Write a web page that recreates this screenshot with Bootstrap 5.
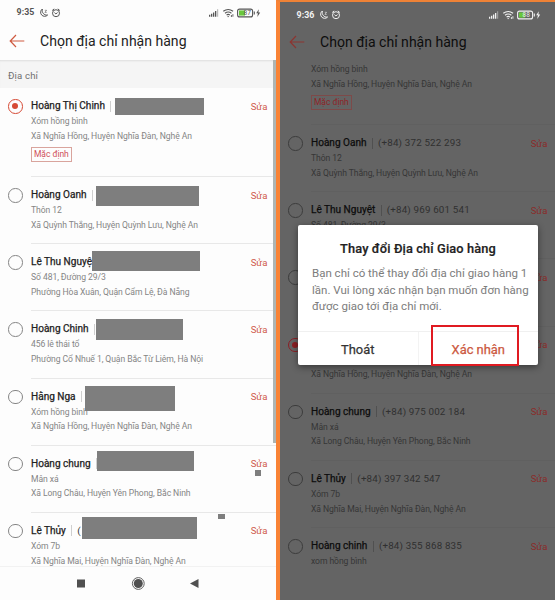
<!DOCTYPE html>
<html lang="vi">
<head>
<meta charset="utf-8">
<meta name="viewport" content="width=device-width, initial-scale=1">
<title>Chọn địa chỉ nhận hàng</title>
<link href="https://cdn.jsdelivr.net/npm/bootstrap@5.3.0/dist/css/bootstrap.min.css" rel="stylesheet">
<style>
body{font-family:Roboto,"Noto Sans",sans-serif;width:555px;height:600px;overflow:hidden;background:#fdfdfd}
.phone{height:600px;--ink:#222;--soft:#858585;--rule:#e8e8e8;--accent:#cf5a4b;--ring:#858585;--bg:#fdfdfd;color:var(--ink);background:var(--bg)}
.phone-a{width:276px}
.phone-b{width:279px;border-left:4px solid #f98335;border-top:2px solid #ee8236;--ink:#0d0d0d;--soft:#363636;--rule:#606060;--accent:#8a2c2a;--ring:#3c3c3c;--bg:#646464}
.status{height:25px;font-size:8.8px;font-weight:700;letter-spacing:.1px;line-height:25px;padding:0 14px 0 16.5px;color:#555}
.phone-b .status{height:26px;line-height:26px;padding:0 13px 0 16.5px;color:#f2f2f2}
.status svg{display:block}
.topbar{height:35px;padding:0 0 4px 9px;gap:15px}
.phone-b .topbar{height:34px;padding-bottom:6px}
.topbar h1{font-size:14.05px;font-weight:400;line-height:20px;margin:0}
.section-label{height:28px;line-height:31px;background:#f5f5f5;font-size:9.6px;color:#6f6f6f;padding-left:8px;box-shadow:inset 0 2px 2px -1px #ddd;letter-spacing:.15px}
.entry{height:67.2px;flex:none;padding-left:8px}
.entry-first{height:89px}
.entry .ring{width:14.5px;height:14.5px;border:1px solid var(--ring);border-radius:50%;margin-top:11px;flex:none}
.entry .ring.on{border:1.5px solid #d64a35;display:grid;place-items:center}
.entry .ring.on::after{content:"";width:6px;height:6px;border-radius:50%;background:#d64a35}
.phone-b .entry .ring.on{border-color:#8b1f24}
.phone-b .entry .ring.on::after{background:#8b1f24}
.entry .info{margin-left:8.5px;padding-top:10px;border-bottom:1px solid var(--rule);white-space:nowrap}
.who{height:16px;line-height:16px;font-size:10.05px;font-weight:400;-webkit-text-stroke:.25px currentColor}
.who .bar{width:1px;height:11px;background:#cfcfcf;margin:0 5px 0 5.5px}
.phone-b .who .bar{background:#505050}
.tel{font-size:9.8px;letter-spacing:.17px;color:#303030;-webkit-text-stroke:0}
.place{height:14.6px;line-height:15.6px;font-size:8.6px;letter-spacing:-.075px;color:var(--soft)}
.edit{position:relative;top:.5px;font-size:9.6px;color:var(--accent);margin-left:auto;padding-right:8.5px;-webkit-text-stroke:0}
.phone-b .edit{padding-right:7.5px}
.tagbox{display:inline-block;border:1px solid #d9a49d;color:#d0505a;font-size:8.5px;line-height:13px;height:15px;padding:0 2px;letter-spacing:-.05px;margin-top:4px;vertical-align:top}
.phone-b .tagbox{border-color:#7d4a49;color:#8d2428}
.clip-view{height:538px;overflow:hidden}
.clip-view>.entry-first{margin-top:-26px}
.mask{position:absolute;background:#7e7e7e}
.m1{left:115px;top:98px;width:89px;height:17px}
.m2{left:96px;top:186px;width:103px;height:20px}
.m3{left:92px;top:251px;width:108px;height:20px}
.m4{left:96px;top:319px;width:87px;height:21px}
.m5{left:85px;top:386px;width:90px;height:25px}
.m6{left:97px;top:451px;width:97px;height:20px}
.m7{left:82px;top:517px;width:115px;height:22px}
.m8{left:255px;top:470px;width:6px;height:6px}
.m9{left:218px;top:514px;width:7px;height:5px}
.scroller{position:absolute;right:0;top:60px;width:3px;height:383px;background:#aeb5b3}
.sysnav{position:absolute;left:0;right:0;bottom:0;height:34px;background:#fdfdfd;border-top:1px solid #f2f2f2}
.sheet{position:absolute;left:298px;top:225px;width:240px;height:140px;background:#fff;border-radius:2px;box-shadow:0 2px 7px rgba(0,0,0,.45)}
.sheet h2{font-size:12.8px;font-weight:500;-webkit-text-stroke:.2px currentColor;color:#222;margin:0;padding-top:15px;line-height:18px;text-align:center;letter-spacing:.12px}
.sheet p{font-size:11.5px;line-height:16.5px;color:#7c7c7c;margin:7px 0 0 14px;white-space:nowrap}
.choices{position:absolute;left:0;right:0;bottom:0;height:34px;border-top:1px solid #f0f0f0;font-size:12.9px;-webkit-text-stroke:.25px currentColor}
.choices button{flex:1;border:0;background:none;padding:2px 0 0;color:#333}
.choices button+button{border-left:1px solid #f3f3f3;color:#cc5840}
.spot{position:absolute;left:431px;top:325px;width:88px;height:41px;border:2px solid #e01a21}
</style>
<script src="https://cdn.jsdelivr.net/npm/bootstrap@5.3.0/dist/js/bootstrap.bundle.min.js"></script>
</head>
<body>
<svg width="0" height="0" class="position-absolute">
<defs>
<symbol id="night" viewBox="0 0 22 10"><g fill="none" stroke="currentColor" stroke-width="1"><path d="M3.4 1A4 4 0 1 0 8.6 7A4.6 4.6 0 0 1 3.400 1Z"/><path d="M5.800 2.300h1.800L5.900 4.400h1.800" stroke-width=".6"/><circle cx="17" cy="5.200" r="3.500"/><path d="M13.200 2.500l2-1.600M20.800 2.500l-2-1.600M15.400 4.600l1.500 1.300 1.700-1.300"/></g></symbol>
<symbol id="signals" viewBox="0 0 54 10">
<g fill="currentColor"><path d="M1 6.8h1.3v2H1zM3 5.7h1.3v3.1H3zM5 4.4h1.3v4.4H5zM7 3h1.3v5.8H7z"/><path d="M9 1.2h1.2v7.6H9z" opacity=".4"/><path d="M50.8 1.2L48.2 5.3h1.7L49.3 9l2.9-4.5h-1.8z"/></g>
<g fill="none" stroke="currentColor" stroke-width="1.1"><path d="M15.3 3.3q4.9-3.5 9.8 0M17 5.2q3.2-2.3 6.4 0M18.6 7q1.6-1.2 3.2 0"/><path d="M19.5 8.6h1.4M23.4 7v2M24.9 6.2v2.5" stroke-width=".9"/><rect x="29.6" y="1.1" width="15" height="7.8" rx="2"/><path d="M46.3 3.5v3"/></g>
<rect x="31" y="2.4" width="6" height="5.2" fill="#69c83c"/></symbol>
<symbol id="back" viewBox="0 0 16 14"><path d="M7 1L1.2 7L7 13M1.2 7H15.3" fill="none" stroke="currentColor" stroke-width="1.2"/></symbol>
</defs></svg>
<main class="d-flex position-relative">
<section class="phone phone-a position-relative overflow-hidden">
<div class="status d-flex align-items-center"><span>9:35</span><svg class="ms-1" width="22" height="10"><use href="#night"/></svg><svg class="ms-auto" width="54" height="10"><use href="#signals"/><text x="35.500" y="7.400" font-size="6.500" font-weight="400" fill="currentColor">87</text></svg></div>
<header class="topbar d-flex align-items-center"><svg width="16" height="14" color="#cf5a40"><use href="#back"/></svg><h1>Chọn địa chỉ nhận hàng</h1></header>
<div class="section-label">Địa chỉ</div>
<div class="entry entry-first d-flex"><i class="ring on"></i><div class="info flex-fill"><div class="who d-flex align-items-center">Hoàng Thị Chinh<i class="bar"></i><span class="edit">Sửa</span></div><div class="place">Xóm hồng bình</div><div class="place">Xã Nghĩa Hồng, Huyện Nghĩa Đàn, Nghệ An</div><span class="tagbox">Mặc định</span></div></div>
<div class="entry d-flex"><i class="ring"></i><div class="info flex-fill"><div class="who d-flex align-items-center">Hoàng Oanh<i class="bar"></i><span class="edit">Sửa</span></div><div class="place">Thôn 12</div><div class="place">Xã Quỳnh Thắng, Huyện Quỳnh Lưu, Nghệ An</div></div></div>
<div class="entry d-flex"><i class="ring"></i><div class="info flex-fill"><div class="who d-flex align-items-center">Lê Thu Nguyệ<span class="edit">Sửa</span></div><div class="place">Số 481, Đường 29/3</div><div class="place">Phường Hòa Xuân, Quận Cẩm Lệ, Đà Nẵng</div></div></div>
<div class="entry d-flex"><i class="ring"></i><div class="info flex-fill"><div class="who d-flex align-items-center">Hoàng Chinh<i class="bar"></i><span class="edit">Sửa</span></div><div class="place">456 lê thái tổ</div><div class="place">Phường Cổ Nhuế 1, Quận Bắc Từ Liêm, Hà Nội</div></div></div>
<div class="entry d-flex"><i class="ring"></i><div class="info flex-fill"><div class="who d-flex align-items-center">Hằng Nga<i class="bar"></i><span class="edit">Sửa</span></div><div class="place">Xóm hồng bình</div><div class="place">Xã Nghĩa Hồng, Huyện Nghĩa Đàn, Nghệ An</div></div></div>
<div class="entry d-flex"><i class="ring"></i><div class="info flex-fill"><div class="who d-flex align-items-center">Hoàng chung<i class="bar"></i><span class="edit">Sửa</span></div><div class="place">Mân xá</div><div class="place">Xã Long Châu, Huyện Yên Phong, Bắc Ninh</div></div></div>
<div class="entry d-flex"><i class="ring"></i><div class="info flex-fill"><div class="who d-flex align-items-center">Lê Thủy<i class="bar"></i><span class="tel">(</span><span class="edit">Sửa</span></div><div class="place">Xóm 7b</div><div class="place">Xã Nghĩa Mai, Huyện Nghĩa Đàn, Nghệ An</div></div></div>
<i class="mask m1"></i><i class="mask m2"></i><i class="mask m3"></i><i class="mask m4"></i><i class="mask m5"></i><i class="mask m6"></i><i class="mask m7"></i><i class="mask m8"></i><i class="mask m9"></i>
<i class="scroller"></i>
<nav class="sysnav"><svg width="276" height="33" fill="#505050"><path d="M77 12.5h8v8h-8zM190 16.5l8.5-4.5v9z"/><circle cx="138.3" cy="16.5" r="4.5"/><circle cx="138.3" cy="16.5" r="5.9" fill="none" stroke="#606060"/></svg></nav>
</section>
<section class="phone phone-b">
<div class="status d-flex align-items-center"><span>9:36</span><svg class="ms-1" width="22" height="10"><use href="#night"/></svg><svg class="ms-auto" width="54" height="10"><use href="#signals"/><text x="34.5" y="7.4" font-size="6.5" font-weight="400" fill="currentColor">88</text></svg></div>
<header class="topbar d-flex align-items-center"><svg width="16" height="14" color="#8c3531"><use href="#back"/></svg><h1>Chọn địa chỉ nhận hàng</h1></header>
<div class="clip-view">
<div class="entry entry-first d-flex"><i class="ring invisible"></i><div class="info flex-fill"><div class="who"></div><div class="place">Xóm hồng bình</div><div class="place">Xã Nghĩa Hồng, Huyện Nghĩa Đàn, Nghệ An</div><span class="tagbox">Mặc định</span></div></div>
<div class="entry d-flex"><i class="ring"></i><div class="info flex-fill"><div class="who d-flex align-items-center">Hoàng Oanh<i class="bar"></i><span class="tel">(+84) 372 522 293</span><span class="edit">Sửa</span></div><div class="place">Thôn 12</div><div class="place">Xã Quỳnh Thắng, Huyện Quỳnh Lưu, Nghệ An</div></div></div>
<div class="entry d-flex"><i class="ring"></i><div class="info flex-fill"><div class="who d-flex align-items-center">Lê Thu Nguyệt<i class="bar"></i><span class="tel">(+84) 969 601 541</span><span class="edit">Sửa</span></div><div class="place">Số 481, Đường 29/3</div></div></div>
<div class="entry d-flex"><i class="ring"></i><div class="info flex-fill"><div class="who d-flex align-items-center"><span class="edit">Sửa</span></div></div></div>
<div class="entry d-flex"><i class="ring on"></i><div class="info flex-fill"><div class="who d-flex align-items-center"><span class="edit">Sửa</span></div><div class="place"></div><div class="place">Xã Nghĩa Hồng, Huyện Nghĩa Đàn, Nghệ An</div></div></div>
<div class="entry d-flex"><i class="ring"></i><div class="info flex-fill"><div class="who d-flex align-items-center">Hoàng chung<i class="bar"></i><span class="tel">(+84) 975 002 184</span><span class="edit">Sửa</span></div><div class="place">Mân xá</div><div class="place">Xã Long Châu, Huyện Yên Phong, Bắc Ninh</div></div></div>
<div class="entry d-flex"><i class="ring"></i><div class="info flex-fill"><div class="who d-flex align-items-center">Lê Thủy<i class="bar"></i><span class="tel">(+84) 397 342 547</span><span class="edit">Sửa</span></div><div class="place">Xóm 7b</div><div class="place">Xã Nghĩa Mai, Huyện Nghĩa Đàn, Nghệ An</div></div></div>
<div class="entry d-flex"><i class="ring"></i><div class="info flex-fill border-0"><div class="who d-flex align-items-center">Hoàng chinh<i class="bar"></i><span class="tel">(+84) 355 868 835</span><span class="edit">Sửa</span></div><div class="place">xom hồng bình</div></div></div>
</div>
</section>
<div class="sheet" role="dialog"><h2>Thay đổi Địa chỉ Giao hàng</h2><p>Bạn chỉ có thể thay đổi địa chỉ giao hàng 1<br>lần. Vui lòng xác nhận bạn muốn đơn hàng<br>được giao tới địa chỉ mới.</p><div class="choices d-flex"><button>Thoát</button><button>Xác nhận</button></div></div>
<i class="spot"></i>
</main>
</body>
</html>
